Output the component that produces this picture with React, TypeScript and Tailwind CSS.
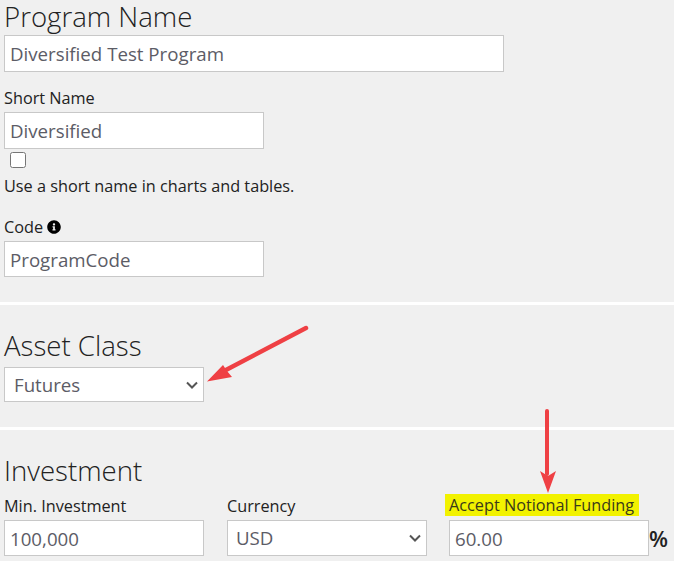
const inputClass = 'block border border-[#c8c8c8] bg-white px-[5px] text-[18.7px] text-[#5c5c66] outline-none'

function ChevronIcon() {
  return (
    <svg viewBox="0 0 12 8" className="pointer-events-none absolute right-[5px] top-1/2 -mt-[4px] h-[8px] w-[12px]" fill="none" stroke="#555" strokeWidth="2">
      <path d="M1 1.5l5 5 5-5" />
    </svg>
  )
}

function InfoIcon() {
  return (
    <svg viewBox="0 0 512 512" className="ml-[4px] h-[14px] w-[14px]" fill="#000">
      <path d="M256 8C119 8 8 119 8 256s111 248 248 248 248-111 248-248S393 8 256 8zm0 110c23 0 42 19 42 42s-19 42-42 42-42-19-42-42 19-42 42-42zm56 254c0 7-5 12-12 12h-88c-7 0-12-5-12-12v-24c0-7 5-12 12-12h12v-64h-12c-7 0-12-5-12-12v-24c0-7 5-12 12-12h64c7 0 12 5 12 12v100h12c7 0 12 5 12 12v24z" />
    </svg>
  )
}

function Select({ value, className }: { value: string; className: string }) {
  return (
    <div className={`relative flex items-center border border-[#c8c8c8] bg-white text-[18.7px] text-[#5c5c66] ${className}`}>
      {value}
      <ChevronIcon />
    </div>
  )
}

export default function App() {
  return (
    <div className="relative h-[561px] w-[674px] overflow-hidden bg-[#f0f0f0] font-['Open_Sans',sans-serif] text-[16.25px] text-[#222]">
      <div className="h-[302px] pl-[4px]">
        <h2 className="h-[35px] text-[27.6px] leading-[32px] font-light">Program Name</h2>
        <input readOnly value="Diversified Test Program" className={`${inputClass} h-[37px] w-[500px]`} />
        <label className="mt-[16px] block h-[24px] leading-[20px]">Short Name</label>
        <input readOnly value="Diversified" className={`${inputClass} h-[37px] w-[260px]`} />
        <input type="checkbox" readOnly className="mt-[3px] ml-[6px] block h-[16px] w-[16px]" />
        <p className="mt-[8px] leading-[20px]">Use a short name in charts and tables.</p>
        <div className="mt-[21px] flex h-[24px] items-start leading-[20px]">
          Code
          <span className="mt-[3px]"><InfoIcon /></span>
        </div>
        <input readOnly value="ProgramCode" className={`${inputClass} h-[36px] w-[260px]`} />
      </div>

      <div className="h-[3px] bg-white" />

      <div className="h-[122px] pl-[4px] pt-[24px]">
        <h2 className="h-[38px] text-[27.6px] leading-[32px] font-light">Asset Class</h2>
        <Select value="Futures" className="h-[35px] w-[200px] pl-[9px] pt-[1px]" />
      </div>

      <div className="h-[3px] bg-white" />

      <div className="pl-[4px] pt-[24px]">
        <h2 className="h-[38px] text-[27.6px] leading-[32px] font-light">Investment</h2>
        <div className="mt-[4px] flex">
          <div className="w-[223px]">
            <label className="block h-[24px] leading-[20px]">Min. Investment</label>
            <input readOnly value="100,000" className={`${inputClass} h-[36px] w-[200px]`} />
          </div>
          <div className="w-[222px]">
            <label className="block h-[24px] leading-[20px]">Currency</label>
            <Select value="USD" className="h-[36px] w-[200px] pl-[8px] pt-[1px]" />
          </div>
          <div>
            <label className="-mt-[2px] -ml-[4px] block h-[22px] w-fit bg-[#f2f200] pl-[4px] pr-[5px] leading-[23px] text-[#3a3a1a]">Accept Notional Funding</label>
            <div className="mt-[4px] flex items-center">
              <input readOnly value="60.00" className={`${inputClass} h-[36px] w-[200px]`} />
              <span className="text-[22px] leading-[30px] font-semibold">%</span>
            </div>
          </div>
        </div>
      </div>

      <svg viewBox="0 0 674 561" className="pointer-events-none absolute inset-0 h-[561px] w-[674px]">
        <path d="M306 328L224 371" stroke="#ef4044" strokeWidth="4.5" strokeLinecap="round" />
        <path d="M207 381.5L223 365L227 371L232 377Z" fill="#ef4044" />
        <path d="M547 411V474" stroke="#ef4044" strokeWidth="4" strokeLinecap="round" />
        <path d="M548 493L540 471L548 476L556 471Z" fill="#ef4044" />
      </svg>
    </div>
  )
}
